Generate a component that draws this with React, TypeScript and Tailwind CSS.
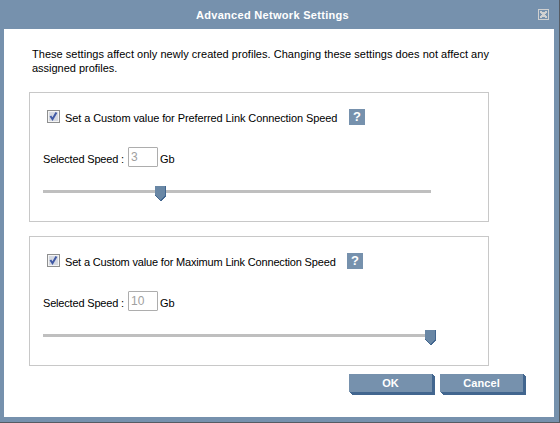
import React from "react";

function Checkbox() {
  return (
    <svg width="13" height="13" shapeRendering="crispEdges" className="block shrink-0">
      <rect width="13" height="13" fill="#8e8f8f" />
      <rect x="1" y="1" width="11" height="11" fill="#f4f4f4" />
      <rect x="2" y="2" width="9" height="9" fill="#d5d9e2" />
      <path d="M3.4 6L5.5 9.2L9.4 2.4" fill="none" stroke="#4059a5" strokeWidth="2" shapeRendering="auto" />
    </svg>
  );
}

function SpeedPanel({ label, labelClass, value, position }: { label: string; labelClass: string; value: string; position: number }) {
  return (
    <section className="h-[130px] w-[460px] border border-[#c8c8c8] pl-[13px]">
      <div className="mt-[16px] flex h-[16px] pl-[4px]">
        <div className="pt-px"><Checkbox /></div>
        <span className={`ml-[5px] pt-[2px] leading-[14px] ${labelClass}`}>{label}</span>
        <span className="h-[16px] w-[16px] bg-[#7691ad] text-center text-[13px] font-bold leading-[16px] text-white">?</span>
      </div>
      <div className="mt-[22px] flex h-[20px]">
        <span className="w-[85px] pt-[5px] leading-[14px] tracking-[-0.18px]">Selected Speed :</span>
        <span className="h-[20px] w-[30px] rounded-[1px] border border-[#adadad] pl-[2px] pt-[2px] text-[12px] leading-[14px] text-[#a0a0a0]">{value}</span>
        <span className="ml-[2px] pt-[5px] leading-[14px]">Gb</span>
      </div>
      <div className="relative mt-[23px] h-[3px] w-[388px] bg-[#bfbfbf]">
        <svg width="11" height="15" shapeRendering="crispEdges" className="absolute -top-[4px]" style={{ left: position }}>
          <path d="M0 0H11V10L6 15H5L0 10Z" fill="#42668f" />
          <path d="M0 0H10V10L5.5 14L0 9Z" fill="#6987a5" />
        </svg>
      </div>
    </section>
  );
}

function Button({ children }: { children: React.ReactNode }) {
  return (
    <button className="relative h-[21px] w-[86px] text-white">
      <svg width="86" height="21" shapeRendering="crispEdges" className="absolute inset-0">
        <path d="M0 18L3 21H86V3L83 0Z" fill="#42668f" />
        <rect width="83" height="18" fill="#7691ad" />
      </svg>
      <span className="relative block h-[21px] w-[83px] text-center font-bold leading-[19px] tracking-[0.1px]">{children}</span>
    </button>
  );
}

export default function App() {
  return (
    <div className="h-[423px] w-[560px] whitespace-nowrap border-b border-r border-[#555b63] bg-[#7691ad] font-['Liberation_Sans',Arial,sans-serif] text-[11px] text-black">
      <header className="relative flex h-[29px] items-center pl-[196px] text-white">
        <h1 className="font-bold leading-[14px] tracking-[0.3px]">Advanced Network Settings</h1>
        <svg width="11" height="11" shapeRendering="crispEdges" className="absolute left-[538px] top-[9px]">
          <rect x="0.5" y="0.5" width="10" height="10" fill="none" stroke="#d0d0d0" />
          <path d="M2 2h2v1h3v-1h2v2h-1v1h-1v1h1v1h1v2h-2v-1h-3v1h-2v-2h1v-1h1v-1h-1v-1h-1z" fill="#d0d0d0" />
        </svg>
      </header>
      <main className="ml-[4px] h-[388px] w-[550px] bg-white pl-[25px] pt-[18px]">
        <p className="h-[45px] pl-[3px] leading-[14px]">
          <span className="tracking-[0.032px]">These settings affect only newly created profiles. Changing these settings does not affect any</span>
          <br />
          <span className="tracking-[-0.02px]">assigned profiles.</span>
        </p>
        <SpeedPanel label="Set a Custom value for Preferred Link Connection Speed" labelClass="w-[284px] tracking-[-0.1px]" value="3" position={112} />
        <div className="h-[14px]" />
        <SpeedPanel label="Set a Custom value for Maximum Link Connection Speed" labelClass="w-[282px] tracking-[-0.17px]" value="10" position={382} />
        <div className="mt-[8px] flex gap-[5px] pl-[320px]">
          <Button>OK</Button>
          <Button>Cancel</Button>
        </div>
      </main>
    </div>
  );
}
